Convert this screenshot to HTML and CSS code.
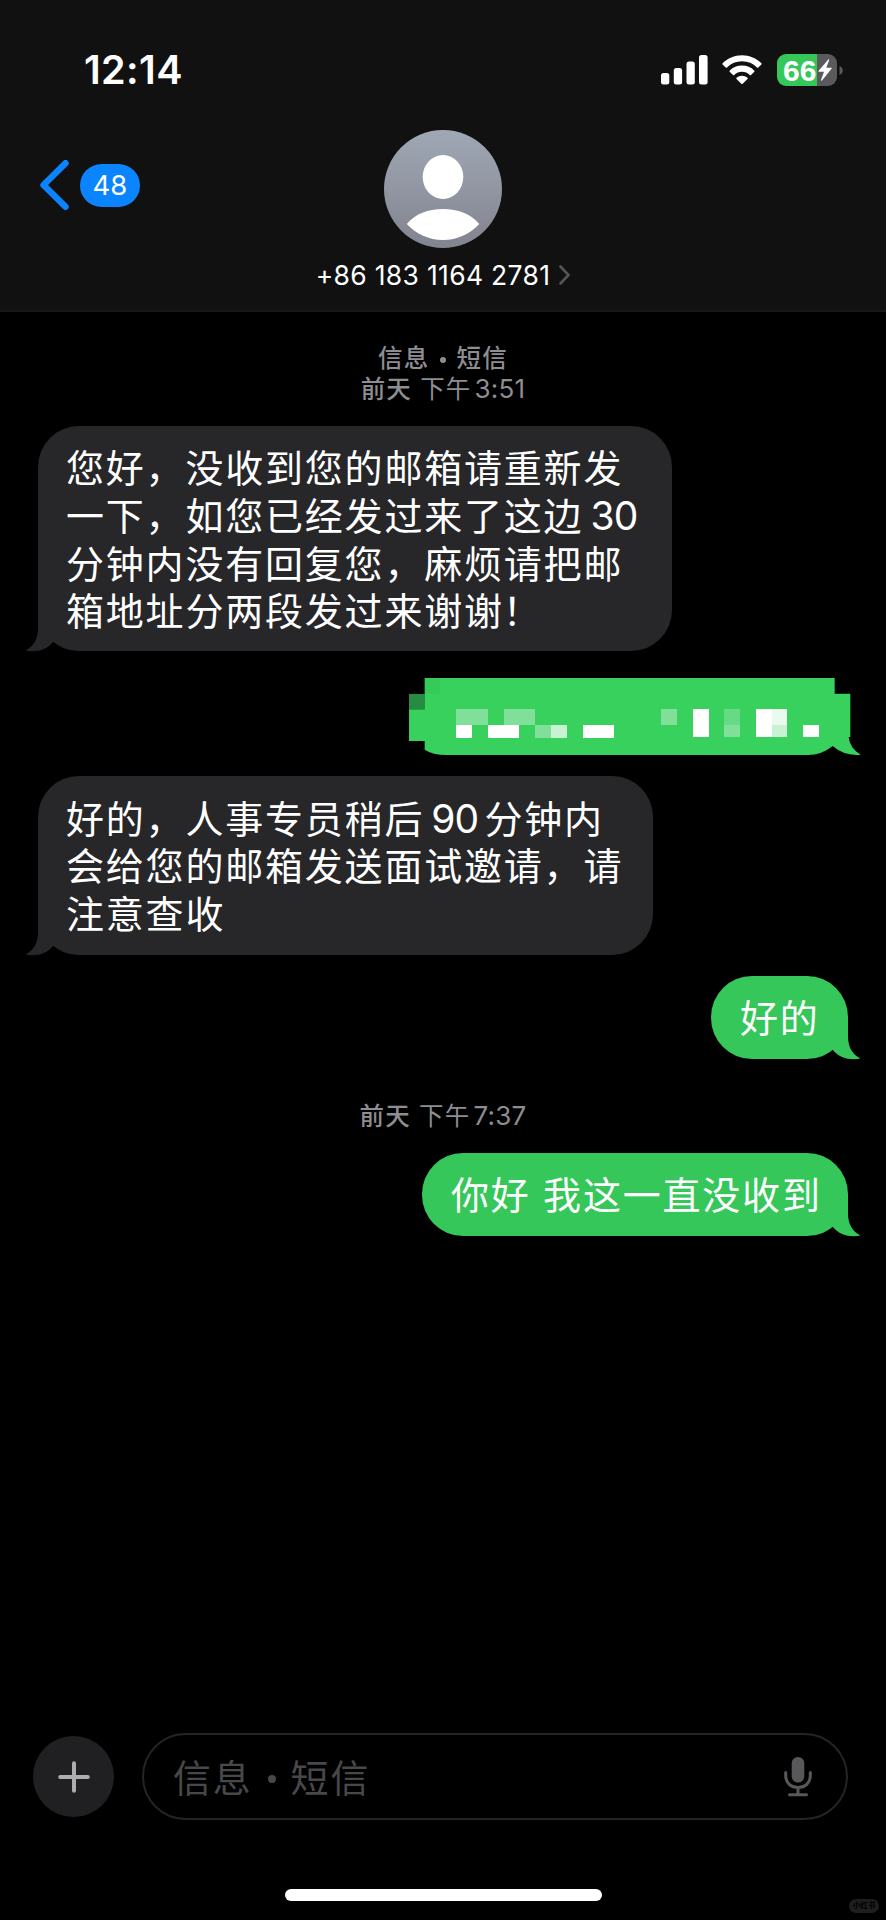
FILE: index.html
```html
<!DOCTYPE html>
<html lang="zh-CN">
<head>
<meta charset="utf-8">
<title>信息</title>
<link rel="stylesheet" href="styles.css">
</head>
<body>
<svg class="defs" width="0" height="0" aria-hidden="true">
  <symbol id="tail" viewBox="0 0 44 50"><path d="M30 4V24C30 35 34 42 42.500 46.600C32 48.500 21 46 15 38L4 30V4Z"/></symbol>
</svg>
<div class="screen">
  <header class="header">
    <div class="status">
      <span class="time">12:14</span>
      <div class="indicators">
        <svg class="signal" viewBox="0 0 47 30"><rect x="0" y="18" width="8.300" height="11.500" rx="2.500"/><rect x="12.800" y="13" width="8.300" height="16.500" rx="2.500"/><rect x="25.500" y="6.500" width="8.300" height="23" rx="2.500"/><rect x="38" y="0" width="8.600" height="29.500" rx="2.500"/></svg>
        <svg class="wifi" viewBox="0 0 40 30"><path d="M20 0.200C27.500 0.200 34.500 3.200 39.400 8.200Q40 8.900 39.400 9.500L36.300 12.500Q35.700 13 35 12.400C31 8.500 25.800 6.300 20 6.300S9 8.500 5 12.400Q4.300 13 3.700 12.500L0.600 9.500Q0 8.900 0.600 8.200C5.500 3.200 12.500 0.200 20 0.200Z"/><path d="M20 10.600C24.700 10.600 29 12.400 32.200 15.400Q32.900 16.100 32.300 16.700L29 19.900Q28.400 20.400 27.700 19.900C25.600 18 22.900 16.800 20 16.800S14.400 18 12.300 19.900Q11.600 20.400 11 19.900L7.700 16.700Q7.100 16.100 7.800 15.400C11 12.400 15.300 10.600 20 10.600Z"/><path d="M20 20.700C22 20.700 24 21.400 25.500 22.700Q26 23.300 25.500 23.900L20.700 28.700Q20 29.300 19.300 28.700L14.500 23.900Q14 23.300 14.500 22.700C16 21.400 18 20.700 20 20.700Z"/></svg>
        <div class="battery">
          <div class="cell"><span class="level">66</span>
            <svg class="bolt" viewBox="0 0 14 22"><path d="M10.500 0.300L0.400 12Q0 12.800 0.900 12.800H6L3 21Q3 22 4 21.500L13.700 9.600Q14 8.800 13.200 8.800H8.300L11.200 1Q11.300 0 10.500 0.300Z"/></svg>
          </div>
          <svg class="nub" viewBox="0 0 4 9"><path d="M0.500 0Q3.700 1.500 3.700 4.500T0.500 9Z"/></svg>
        </div>
      </div>
    </div>
    <div class="nav">
      <div class="back">
        <svg class="back-arrow" viewBox="0 0 29 50"><path d="M25.500 3.200L3.500 25L25.500 46.800"/></svg>
        <span class="count">48</span>
      </div>
      <div class="contact">
        <svg class="avatar" viewBox="0 0 118 118">
          <defs><linearGradient id="shade" x1="0" y1="0" x2="0" y2="1"><stop offset="0" stop-color="#a0a8b5"/><stop offset="1" stop-color="#82848f"/></linearGradient></defs>
          <circle cx="59" cy="59" r="59" fill="url(#shade)"/>
          <ellipse cx="59" cy="47" rx="20.300" ry="22" fill="#fff"/>
          <path d="M22.800 94C31 84 44 79 59 79S87 84 95.300 94C86 104 73 110 59 110S32 104 22.800 94Z" fill="#fff"/>
        </svg>
        <div class="number"><span>+86 183 1164 2781</span><svg class="more" viewBox="0 0 11 20"><path d="M1.500 1.500L9.500 10L1.500 18.500"/></svg></div>
      </div>
    </div>
  </header>

  <main class="thread">
    <div class="stamp"><div class="service">信息 <i class="sep"></i> 短信</div><div><b>前天</b> 下午<span class="clock">3:51</span></div></div>

    <div class="bubble received first">
      <p>您好，没收到您的邮箱请重新发</p><p>一下，如您已经发过来了这边<span class="num end">30</span></p><p>分钟内没有回复您，麻烦请把邮</p><p>箱地址分两段发过来谢谢<span class="bang">！</span></p>
      <svg class="tail"><use href="#tail"/></svg>
    </div>

    <svg class="censored" viewBox="28 39 1356 231" shape-rendering="crispEdges">
      <path fill="#39d15e" shape-rendering="auto" d="M75 39H1305V86H1352V216H1347Q1350 250 1383 269Q1335 274 1299 243Q1266 270 1225 270H140Q100 270 75 254V228H28V133H75Z"/>
      <path fill="#258c41" d="M28 86H75V133H28Z"/>
      <path fill="#36cb59" d="M75 39H122V86H75Z"/>
      <path fill="#80e099" d="M170 132H264V180H170ZM312 132H407V180H312ZM407 180H454V220H407ZM784 132H831V180H784ZM973 180H1020V216H973Z"/>
      <path fill="#67db84" d="M973 132H1020V180H973Z"/>
      <path fill="#c9f2d3" d="M454 180H501V220H454ZM1116 180H1163V216H1116Z"/>
      <path fill="#ebfaef" d="M1116 132H1163V180H1116Z"/>
      <path fill="#fff" d="M170 180H218V220H170ZM264 180H359V220H264ZM549 180H643V220H549ZM879 132H927V216H879ZM1068 132H1116V216H1068ZM1210 180H1257V216H1210Z"/>
    </svg>

    <div class="bubble received second">
      <p>好的，人事专员稍后<span class="num">90</span>分钟内</p><p>会给您的邮箱发送面试邀请，请</p><p>注意查收</p>
      <svg class="tail"><use href="#tail"/></svg>
    </div>

    <div class="bubble sent ok"><p>好的</p><svg class="tail"><use href="#tail"/></svg></div>

    <div class="stamp later"><div><b>前天</b> 下午<span class="clock">7:37</span></div></div>

    <div class="bubble sent last"><p>你好 我这一直没收到</p><svg class="tail"><use href="#tail"/></svg></div>
  </main>

  <footer class="composer">
    <div class="plus"><svg viewBox="0 0 32 32"><path d="M16 2.200V29.800M2.200 16H29.800"/></svg></div>
    <div class="field"><span class="placeholder">信息 <i class="dot"></i> 短信</span>
      <svg class="mic" viewBox="0 0 28 40"><rect x="7.700" y="0" width="12.600" height="25.500" rx="6.300"/><path d="M1.700 15.500V18.500C1.700 26 7 30.500 14 30.500S26.300 26 26.300 18.500V15.500M14 31V37M5.500 37.700H22.500"/></svg>
    </div>
  </footer>
  <div class="home"></div>
  <div class="watermark">小红书</div>
</div>
</body>
</html>
```
FILE: styles.css
```css
* { box-sizing: border-box; }
body { margin: 0; background: #000; }
p { margin: 0; white-space: nowrap; }
svg { display: block; flex: none; }
.defs { position: absolute; }

.screen {
  position: relative;
  width: 886px;
  height: 1920px;
  overflow: hidden;
  display: flex;
  flex-direction: column;
  background: #000;
  color: #fff;
  font-family: Inter, "Noto Sans CJK SC", sans-serif;
}

.header {
  height: 312px;
  flex: none;
  background: #111;
  border-bottom: 2px solid #191919;
  padding-top: 50px;
}
.status {
  height: 40px;
  display: flex;
  align-items: center;
  justify-content: space-between;
  padding: 0 43px 0 84px;
}
.time { font-size: 39.500px; font-weight: 600; line-height: 40px; letter-spacing: 0.400px; }
.indicators { display: flex; align-items: center; }
.signal { width: 47px; height: 30px; fill: #fff; }
.wifi { width: 40px; height: 30px; fill: #fff; margin-left: 14px; }
.battery { display: flex; align-items: center; margin-left: 15px; gap: 2px; }
.cell {
  width: 60px;
  height: 32px;
  border-radius: 9px;
  background: linear-gradient(to right, #35c759 40px, #5a5a5c 40px);
  display: flex;
  align-items: center;
  padding-left: 6px;
}
.level { width: 34px; font-family: "Liberation Sans", sans-serif; font-size: 30px; font-weight: 700; line-height: 33px; }
.bolt { width: 14px; height: 22px; fill: #fff; margin-left: 1px; }
.nub { width: 4px; height: 9px; fill: #5a5a5c; }

.nav {
  display: grid;
  grid-template-columns: 1fr auto 1fr;
  padding: 40px 40px 0;
}
.back { display: flex; align-items: center; height: 50px; margin-top: 30px; gap: 11px; }
.back-arrow { width: 29px; height: 50px; fill: none; stroke: #0a84ff; stroke-width: 6.400; stroke-linecap: round; stroke-linejoin: round; }
.count {
  width: 60px;
  height: 43px;
  border-radius: 22px;
  background: #0a84ff;
  font-size: 27.500px;
  line-height: 43px;
  text-align: center;
}
.contact { display: flex; flex-direction: column; align-items: center; }
.avatar { width: 118px; height: 118px; }
.number { display: flex; align-items: center; gap: 9px; margin-top: 10px; font-size: 26.500px; line-height: 34px; letter-spacing: 0.300px; white-space: nowrap; }
.more { width: 11px; height: 20px; fill: none; stroke: #55555a; stroke-width: 2.600; stroke-linecap: round; }

.thread { flex: 1; display: flex; flex-direction: column; padding: 31px 38px 0; }
.stamp { text-align: center; font-size: 24.500px; line-height: 30.500px; letter-spacing: 1.200px; color: #8d8d92; height: 61px; }
.stamp b { font-weight: 500; }
.clock { font-size: 26px; letter-spacing: 0.200px; margin-left: 3px; }
.service { font-weight: 500; display: flex; justify-content: center; align-items: center; }
.sep { width: 6px; height: 6px; border-radius: 50%; background: #8d8d92; margin: 3px 11px 0 10px; }

.bubble {
  position: relative;
  border-radius: 41px;
  font-size: 38px;
  line-height: 47.330px;
  letter-spacing: 1.800px;
}
.received { align-self: flex-start; background: #27272a; fill: #27272a; padding: 19px 0 0 28px; }
.sent { align-self: flex-end; background: #35c759; fill: #35c759; padding: 19px 0 0 29px; height: 83px; }
.first { width: 634px; height: 225px; margin-top: 22px; }
.second { width: 615px; height: 179px; margin-top: 21px; }
.ok { width: 137px; margin-top: 21px; }
.last { width: 426px; margin-top: 14px; }
.later { height: 31px; margin-top: 42px; line-height: 30px; margin-bottom: 7px; }
.num { font-size: 39px; letter-spacing: -0.800px; margin: 0 6px 0 7px; }
.bang { margin-left: -1px; }

/* Speech tails hang over the lower outer corner of each bubble. */
.tail { position: absolute; width: 44px; height: 50px; bottom: -3px; right: -14px; }
.received .tail { right: auto; left: -14px; transform: scaleX(-1); }

.censored { width: 452px; height: 77px; align-self: flex-end; margin: 27px -13px 0 0; }

.composer {
  flex: none;
  height: 87px;
  display: flex;
  align-items: center;
  gap: 28px;
  padding: 0 38px 0 33px;
  margin-bottom: 69px;
}
.plus { width: 81px; height: 81px; border-radius: 50%; background: #202022; display: grid; place-items: center; }
.plus svg { width: 32px; height: 32px; fill: none; stroke: #aeaeb2; stroke-width: 4; stroke-linecap: round; }
.field {
  flex: 1;
  height: 87px;
  border: 2px solid #242426;
  border-radius: 44px;
  display: flex;
  align-items: center;
  justify-content: space-between;
  padding: 0 34px 0 29px;
}
.placeholder { display: flex; align-items: center; padding-top: 2px; font-size: 38px; line-height: 48px; letter-spacing: 1.800px; color: #48484a; }
.dot { width: 8px; height: 8px; border-radius: 50%; background: #48484a; margin: 3px 15px 0 15px; }
.mic { width: 28px; height: 40px; fill: #58585a; }
.mic path { fill: none; stroke: #58585a; stroke-width: 3; stroke-linecap: round; }

.home { flex: none; align-self: center; width: 317px; height: 12px; border-radius: 6px; background: #fff; margin-bottom: 19px; }
.watermark {
  position: absolute;
  right: 7px;
  bottom: 7px;
  width: 30px;
  height: 14px;
  border-radius: 7px;
  background: #1e1e1e;
  color: #000;
  font-size: 7.500px;
  font-weight: 700;
  line-height: 14px;
  text-align: center;
}
```
